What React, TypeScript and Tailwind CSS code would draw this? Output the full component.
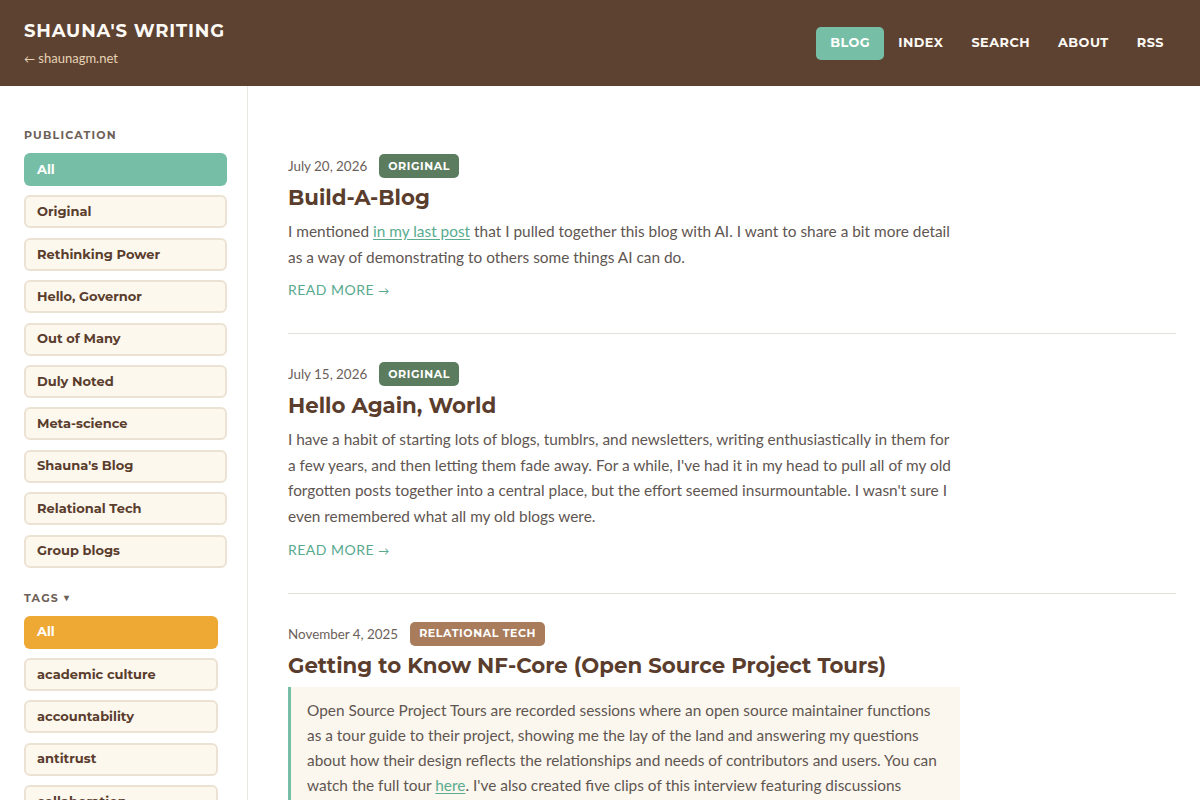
import React from "react";

const HEAD = { fontFamily: "Montserrat, Inter, 'Noto Sans', sans-serif" };
const BODY = { fontFamily: "Lato, 'Noto Sans', sans-serif" };

const publications = [
  "All",
  "Original",
  "Rethinking Power",
  "Hello, Governor",
  "Out of Many",
  "Duly Noted",
  "Meta-science",
  "Shauna's Blog",
  "Relational Tech",
  "Group blogs",
];

const tags = ["All", "academic culture", "accountability", "antitrust", "collaboration", "community", "democracy"];

function Badge({ label, color }: { label: string; color: string }) {
  return (
    <span
      style={HEAD}
      className={`inline-flex h-[24px] items-center rounded-[5px] px-[9px] text-[11px] font-bold uppercase tracking-[0.6px] text-white ${color}`}
    >
      {label}
    </span>
  );
}

function Post({
  date,
  badge,
  badgeColor,
  title,
  children,
  last,
}: {
  date: string;
  badge: string;
  badgeColor: string;
  title: string;
  children: React.ReactNode;
  last?: boolean;
}) {
  return (
    <article className={`pt-[28px] pb-[32px] ${last ? "" : "border-b border-[#e4e0dc]"}`}>
      <div className="flex items-center gap-[12px]">
        <span style={BODY} className="text-[13.4px] text-[#6b605a]">
          {date}
        </span>
        <Badge label={badge} color={badgeColor} />
      </div>
      <h2 style={HEAD} className="mt-[4px] text-[21.3px] font-bold leading-[30px] text-[#5a3d2d]">
        {title}
      </h2>
      {children}
    </article>
  );
}

function ReadMore() {
  return (
    <div style={BODY} className="mt-[10px] text-[14px] uppercase leading-[20px] tracking-[0.5px] text-[#58a98e]">
      Read more <span className="text-[11px]">→</span>
    </div>
  );
}

export default function App() {
  return (
    <div className="min-h-screen bg-white" style={BODY}>
      <header className="flex h-[86px] items-center justify-between bg-[#5d4232] pl-[24px] pr-[22px]">
        <div className="flex flex-col pb-[1px]">
          <div style={HEAD} className="text-[18px] font-bold uppercase leading-[24px] tracking-[0.85px] text-[#fdfaf5]">
            Shauna's Writing
          </div>
          <div style={BODY} className="mt-[7px] text-[13px] leading-[16px] text-[#e6d2b4]">
            <span className="text-[11px]">←</span> shaunagm.net
          </div>
        </div>
        <nav className="flex items-center">
          {["Blog", "Index", "Search", "About", "RSS"].map((n, i) => (
            <span
              key={n}
              style={HEAD}
              className={`flex h-[33px] items-center rounded-[5px] px-[14px] text-[12.8px] font-bold uppercase tracking-[0.5px] ${
                i === 0 ? "bg-[#76bfa6] text-white" : "text-[#fdfaf5]"
              }`}
            >
              {n}
            </span>
          ))}
        </nav>
      </header>

      <div className="flex">
        <aside className="w-[248px] shrink-0 border-r border-[#ebe7e3] pl-[24px] pr-[20px] pt-[41px]">
          <div style={HEAD} className="text-[11px] font-bold uppercase leading-[16px] tracking-[1.2px] text-[#6e6158]">
            Publication
          </div>
          <div className="mt-[10px] flex flex-col gap-[9.4px]">
            {publications.map((p, i) => (
              <div
                key={p}
                style={HEAD}
                className={`flex h-[33px] items-center rounded-[6px] text-[13px] font-bold ${
                  i === 0
                    ? "bg-[#76bfa6] px-[13px] text-white"
                    : "border-2 border-[#ece2d4] bg-[#fdf8ee] px-[11px] text-[#5a3d2d]"
                }`}
              >
                {p}
              </div>
            ))}
          </div>
          <div
            style={HEAD}
            className="mt-[22px] flex items-center gap-[5px] text-[11px] font-bold uppercase leading-[16px] tracking-[1.2px] text-[#6e6158]"
          >
            Tags <span className="text-[10px]">▾</span>
          </div>
          <div className="mt-[10px] flex flex-col gap-[9.4px] pr-[9px]">
            {tags.map((t, i) => (
              <div
                key={t + i}
                style={HEAD}
                className={`flex h-[33px] items-center rounded-[6px] text-[13px] font-bold ${
                  i === 0
                    ? "bg-[#eea834] px-[13px] text-white"
                    : "border-2 border-[#ece2d4] bg-[#fdf8ee] px-[11px] text-[#5a3d2d]"
                }`}
              >
                {t}
              </div>
            ))}
          </div>
        </aside>

        <main className="flex-1 pl-[40px] pr-[24px] pt-[40px]">
          <Post date="July 20, 2026" badge="Original" badgeColor="bg-[#5b7c5e]" title="Build-A-Blog">
            <p className="mt-[7px] max-w-[672px] text-[15.4px] leading-[25.6px] text-[#5f5652]">
              I mentioned{" "}
              <a className="text-[#5aab90] underline underline-offset-2">in my last post</a> that I pulled together
              this blog with AI. I want to share a bit more detail as a way of demonstrating to others some things AI
              can do.
            </p>
            <ReadMore />
          </Post>
          <Post date="July 15, 2026" badge="Original" badgeColor="bg-[#5b7c5e]" title="Hello Again, World">
            <p className="mt-[7px] max-w-[672px] text-[15.4px] leading-[25.6px] text-[#5f5652]">
              I have a habit of starting lots of blogs, tumblrs, and newsletters, writing enthusiastically in them for
              a few years, and then letting them fade away. For a while, I've had it in my head to pull all of my old
              forgotten posts together into a central place, but the effort seemed insurmountable. I wasn't sure I
              even remembered what all my old blogs were.
            </p>
            <ReadMore />
          </Post>
          <Post
            date="November 4, 2025"
            badge="Relational Tech"
            badgeColor="bg-[#a97c5b]"
            title="Getting to Know NF-Core (Open Source Project Tours)"
            last
          >
            <blockquote className="mt-[7px] max-w-[672px] border-l-[3px] border-[#76bfa6] bg-[#fcf7ee] py-[11px] pl-[16px] pr-[16px] text-[15.4px] leading-[25.2px] text-[#5f5652]">
              Open Source Project Tours are recorded sessions where an open source maintainer functions as a tour
              guide to their project, showing me the lay of the land and answering my questions about how their design
              reflects the relationships and needs of contributors and users. You can watch the full tour{" "}
              <a className="text-[#5aab90] underline underline-offset-2">here</a>. I've also created five clips of
              this interview featuring discussions around several key topics.
            </blockquote>
            <ReadMore />
          </Post>
        </main>
      </div>
    </div>
  );
}
